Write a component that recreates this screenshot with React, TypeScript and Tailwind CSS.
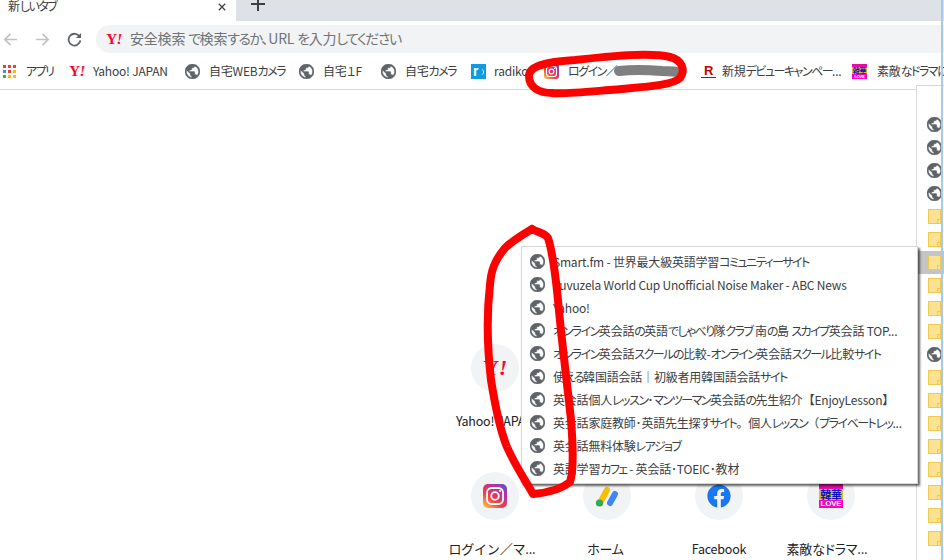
import type { ReactNode } from 'react';
import { FaFacebook } from 'react-icons/fa';

const FONT = "font-['Noto_Sans_CJK_JP','Noto_Sans',sans-serif] [font-feature-settings:'palt'] tracking-[-0.2px]";

// かなは狭く、全角記号は全角のまま
function JpText({ text }: { text: string }) {
  const parts = text.split(/([\u3040-\u30ff]+|[／｜（）【】。]+)/).filter(Boolean);
  return (
    <>
      {parts.map((p, i) => {
        if (/^[\u3040-\u30ff]/.test(p)) {
          return <span key={i} className="tracking-[-1.5px]">{p}</span>;
        }
        if (/^[／｜（）【】。]/.test(p)) {
          return <span key={i} className="[font-feature-settings:normal]">{p}</span>;
        }
        return <span key={i}>{p}</span>;
      })}
    </>
  );
}

function Globe({ className = 'w-[15px] h-[15px]' }: { className?: string }) {
  return (
    <svg viewBox="2 2 20 20" className={`${className} shrink-0`}>
      <circle cx="12" cy="12" r="9" fill="#fff" />
      <path
        fill="#5f6368"
        stroke="#5f6368"
        strokeWidth="0.5"
        d="M12 2C6.48 2 2 6.48 2 12s4.48 10 10 10 10-4.48 10-10S17.52 2 12 2zm-1 17.93c-3.95-.49-7-3.85-7-7.93 0-.62.08-1.21.21-1.79L9 15v1c0 1.1.9 2 2 2v1.93zm6.9-2.54c-.26-.81-1-1.39-1.9-1.39h-1v-3c0-.55-.45-1-1-1H8v-2h2c.55 0 1-.45 1-1V7h2c1.1 0 2-.9 2-2v-.41c2.93 1.19 5 4.06 5 7.41 0 2.08-.8 3.97-2.1 5.39z"
      />
    </svg>
  );
}

function Folder() {
  return (
    <div className="relative w-[13px] h-[15px] bg-[#fde293] border border-[#f2c94c] shrink-0">
      <div className="absolute right-[-1px] bottom-[-1px] w-[4px] h-[5px] border border-[#f2c94c]" />
    </div>
  );
}

function YahooMark({ className = 'text-[15px]' }: { className?: string }) {
  return (
    <span className={`font-['Liberation_Serif',serif] font-bold leading-none tracking-[-0.5px] text-[#ff0033] ${className}`}>
      Y<i>!</i>
    </span>
  );
}

function Instagram({ size = 'w-[15px] h-[15px]' }: { size?: string }) {
  return (
    <svg viewBox="0 0 24 24" className={`${size} shrink-0`}>
      <defs>
        <linearGradient id="ig" x1="0.1" y1="1" x2="0.9" y2="0">
          <stop offset="0" stopColor="#fdc04f" />
          <stop offset="0.35" stopColor="#f0433f" />
          <stop offset="0.7" stopColor="#c02f9b" />
          <stop offset="1" stopColor="#5a51cf" />
        </linearGradient>
      </defs>
      <rect width="24" height="24" rx="5" fill="url(#ig)" />
      <rect x="4" y="4" width="16" height="16" rx="4.5" fill="none" stroke="#fff" strokeWidth="1.8" />
      <circle cx="12" cy="12" r="3.8" fill="none" stroke="#fff" strokeWidth="1.8" />
      <circle cx="17" cy="7" r="1.1" fill="#fff" />
    </svg>
  );
}

function KankaLogo({ size = 'w-[15px] h-[15px]', big = false }: { size?: string; big?: boolean }) {
  return (
    <div className={`${size} bg-[#f404c4] flex flex-col items-center justify-between overflow-hidden shrink-0`}>
      <div className="h-[18%] w-full bg-[#e0109c]" />
      <div className={`w-full text-center bg-[#d8c020] text-[#1010c0] font-bold leading-none whitespace-nowrap ${big ? 'text-[11px]' : 'text-[7px]'}`}>
        韓華
      </div>
      <div className={`text-white font-bold leading-none font-['Liberation_Sans',sans-serif] ${big ? 'text-[8px]' : 'text-[4px]'}`}>
        LOVE
      </div>
    </div>
  );
}

function AppsIcon() {
  const colors = ['bg-[#ea4335]', 'bg-[#ea4335]', 'bg-[#ea4335]', 'bg-[#4285f4]', 'bg-[#ea4335]', 'bg-[#fbbc04]', 'bg-[#34a853]', 'bg-[#fbbc04]', 'bg-[#fbbc04]'];
  return (
    <div className="grid grid-cols-3 gap-[2px] w-[13px] h-[13px] shrink-0">
      {colors.map((c, i) => (
        <div key={i} className={c} />
      ))}
    </div>
  );
}

const bookmarks = [
  { label: 'アプリ', icon: <AppsIcon />, width: 'w-[66px]', gap: 'gap-[10px]' },
  { label: 'Yahoo! JAPAN', icon: <div className="w-[16px] flex justify-center"><YahooMark /></div>, width: 'w-[116px]', gap: 'gap-[8px]' },
  { label: '自宅WEBカメラ', icon: <Globe />, width: 'w-[114px]', gap: 'gap-[9px]' },
  { label: '自宅１F', icon: <Globe />, width: 'w-[82px]', gap: 'gap-[9px]' },
  { label: '自宅カメラ', icon: <Globe />, width: 'w-[90px]', gap: 'gap-[9px]' },
  { label: 'radiko', icon: (
    <div className="relative w-[15px] h-[15px] bg-[#0f9be0] text-white text-[14px] leading-[14px] font-bold pl-[2px] shrink-0 font-['Liberation_Sans',sans-serif]">
      r
      <div className="absolute right-[2px] top-[5px] w-[3px] h-[6px] rounded-r-full border-r border-white" />
    </div>
  ), width: 'w-[73px]', gap: 'gap-[8px]' },
  { label: 'ログイン／', icon: <Instagram />, width: 'w-[157px]', gap: 'gap-[9px]' },
  { label: '新規デビューキャンペー...', icon: (
    <div className="w-[15px] flex justify-center border-b border-[#bf0000] text-[#bf0000] font-bold text-[13px] leading-[13px] font-['Liberation_Sans',sans-serif] shrink-0">R</div>
  ), width: 'w-[151px]', gap: 'gap-[6px]' },
  { label: '素敵なドラマに', icon: <KankaLogo />, width: 'w-[100px]', gap: 'gap-[10px]' },
];

const menuItems = [
  'Smart.fm - 世界最大級英語学習コミュニティーサイト',
  'Vuvuzela World Cup Unofficial Noise Maker - ABC News',
  'Yahoo!',
  'オンライン英会話の英語でしゃべり隊クラブ 南の島 スカイプ英会話 TOP...',
  'オンライン英会話スクールの比較-オンライン英会話スクール比較サイト',
  '使える韓国語会話｜初級者用韓国語会話サイト',
  '英会話個人レッスン･マンツーマン英会話の先生紹介【EnjoyLesson】',
  '英会話家庭教師･英語先生探すサイト。個人レッスン（プライベートレッ...',
  '英会話無料体験レアジョブ',
  '英語学習カフェ - 英会話･TOEIC･教材',
];

const panelIcons = ['g', 'g', 'g', 'g', 'f', 'f', 'f', 'f', 'f', 'f', 'g', 'f', 'f', 'f', 'f', 'f', 'f', 'f', 'f'];

function Shortcut({ label, labelClass = 'text-[12.5px]', children }: { label: string; labelClass?: string; children?: ReactNode }) {
  return (
    <div className="flex flex-col items-center">
      <div className="w-[48px] h-[48px] rounded-full bg-[#f1f3f4] flex items-center justify-center">{children}</div>
      <div className={`mt-[20px] leading-[18px] text-[#202124] w-[100px] text-center whitespace-nowrap ${labelClass}`}>{label}</div>
    </div>
  );
}

export default function App() {
  return (
    <div className={`relative w-[944px] h-[560px] overflow-hidden bg-white ${FONT}`}>
      {/* タブ */}
      <div className="flex h-[21px] bg-[#dee1e6]">
        <div className="w-[236px] bg-white flex items-center justify-between pl-[8px] pr-[10px] overflow-hidden">
          <span className="text-[12px] leading-none text-[#3c4043] -mt-[9px]"><JpText text="新しいタブ" /></span>
          <svg viewBox="0 0 10 10" className="w-[8px] h-[8px] -mt-[8px]">
            <path d="M1 1 L9 9 M9 1 L1 9" stroke="#3c4043" strokeWidth="1.6" />
          </svg>
        </div>
        <div className="flex-1 rounded-bl-[8px] pl-[15px]">
          <svg viewBox="0 0 14 14" className="w-[14px] h-[14px] -mt-[3px]">
            <path d="M7 0 V14 M0 7 H14" stroke="#3c4043" strokeWidth="2" />
          </svg>
        </div>
      </div>

      {/* ツールバー */}
      <div className="h-[32px] bg-white flex items-end">
        <div className="w-[96px] h-[28px] flex items-center pl-[3px] gap-[17px]">
          <svg viewBox="0 0 16 16" className="w-[15px] h-[15px]">
            <path d="M15 8 H2 M8 2 L2 8 L8 14" fill="none" stroke="#c0c2c5" strokeWidth="1.8" />
          </svg>
          <svg viewBox="0 0 16 16" className="w-[15px] h-[15px]">
            <path d="M1 8 H14 M8 2 L14 8 L8 14" fill="none" stroke="#c0c2c5" strokeWidth="1.8" />
          </svg>
          <svg viewBox="0 0 16 16" className="w-[15px] h-[15px]">
            <path d="M13.5 5 A6.3 6.3 0 1 0 14.3 9" fill="none" stroke="#5f6368" strokeWidth="1.9" />
            <path d="M15 1 V6.5 H9.5 Z" fill="#5f6368" />
          </svg>
        </div>
        <div className="flex-1 h-[28px] bg-[#f1f3f4] rounded-l-[14px] flex items-center pl-[10px] gap-[8px]">
          <div className="w-[16px] flex justify-center">
            <YahooMark />
          </div>
          <span className="text-[14px] leading-none text-[#6f7478] -mt-[2px]"><JpText text="安全検索 で検索するか、URL を入力してください" /></span>
        </div>
      </div>

      {/* ブックマークバー */}
      <div className="h-[37px] border-b border-[#d9d9d9] flex items-center pl-[3px] overflow-hidden">
        {bookmarks.map((b) => (
          <div key={b.label} className={`flex items-center shrink-0 overflow-hidden ${b.width} ${b.gap}`}>
            {b.icon}
            <span className="text-[12px] leading-none text-[#3c4043] whitespace-nowrap"><JpText text={b.label} /></span>
          </div>
        ))}
      </div>

      {/* ショートカット */}
      <div className="pt-[254px] pl-[439px]">
        <div className="grid grid-cols-[repeat(4,112px)] auto-rows-[128px]">
          <Shortcut label="Yahoo! JAPAN"><YahooMark className="text-[22px]" /></Shortcut>
          <Shortcut label="" />
          <Shortcut label="" />
          <Shortcut label="" />
          <Shortcut label="ログイン／マ..." labelClass="text-[13px] pr-[6px] [font-feature-settings:normal]">
            <Instagram size="w-[24px] h-[24px]" />
          </Shortcut>
          <Shortcut label="ホーム" labelClass="text-[13px] pr-[3px]">
            <svg viewBox="0 0 24 24" className="w-[24px] h-[24px]">
              <path d="M5 19 L12 6" stroke="#fbbc04" strokeWidth="6" strokeLinecap="round" />
              <path d="M15 19 L20 10" stroke="#4285f4" strokeWidth="6" strokeLinecap="round" />
              <circle cx="4.5" cy="19" r="3.6" fill="#34a853" />
            </svg>
          </Shortcut>
          <Shortcut label="Facebook">
            <FaFacebook className="w-[24px] h-[24px] text-[#1877f2]" />
          </Shortcut>
          <Shortcut label="素敵なドラマ..." labelClass="text-[13px] pr-[8px]">
            <KankaLogo size="w-[24px] h-[24px]" big />
          </Shortcut>
        </div>
      </div>

      {/* 右のブックマーク一覧 */}
      <div className="absolute left-[916px] top-[85px] w-[28px] h-[475px] bg-white border-l border-t border-[#d9d9d9] pt-[27px] pl-[10px]">
        {panelIcons.map((k, i) => (
          <div key={i} className={`h-[23px] flex items-center ${i === 6 ? 'bg-[#c4c4c4] -ml-[10px] pl-[10px]' : ''}`}>
            {k === 'g' ? <Globe /> : <div className="pl-[1px]"><Folder /></div>}
          </div>
        ))}
      </div>

      {/* フォルダのメニュー */}
      <div className="absolute left-[521px] top-[246px] w-[397px] h-[238px] bg-white border border-[#d6d6d6] shadow-[2px_2px_2px_rgba(0,0,0,0.6)] py-[3px]">
        {menuItems.map((m) => (
          <div key={m} className="h-[23px] flex items-center pl-[8px] gap-[8px]">
            <Globe />
            <span className="text-[12px] leading-none text-[#3c4043] whitespace-nowrap"><JpText text={m} /></span>
          </div>
        ))}
      </div>

      {/* 選択範囲の青い点線 */}
      <div className="absolute left-[941px] top-0 w-[2px] h-[560px] bg-[#a9c8f0]" />

      {/* 手書きの赤い囲みとぼかし */}
      <svg viewBox="0 0 944 560" className="absolute inset-0 w-[944px] h-[560px] pointer-events-none">
        <path d="M619 71 C635 69 650 70 662 71 C672 71 678 72 681 73" fill="none" stroke="#808080" strokeWidth="10" strokeLinecap="round" />
        <path
          d="M552 93 C540 93 529 88 529 76 C529 66 545 62 575 60 C610 56 650 52 670 57 C682 60 686 70 680 78 C672 86 640 87 610 90 C585 92 565 94 552 93"
          fill="none"
          stroke="#ff0000"
          strokeWidth="8"
          strokeLinecap="round"
        />
        <path
          d="M532 229 C522 235 512 241 505 248 C495 260 491 270 490 285 C487 310 487 345 491 380 C495 405 500 430 507 447 C515 465 525 480 533 494 C545 493 560 490 570 482 C574 470 573 445 571 420 C568 390 562 345 558 300 C555 270 552 250 548 238 C544 232 538 233 532 229"
          fill="none"
          stroke="#ff0000"
          strokeWidth="8"
          strokeLinecap="round"
          strokeLinejoin="round"
        />
      </svg>
    </div>
  );
}
